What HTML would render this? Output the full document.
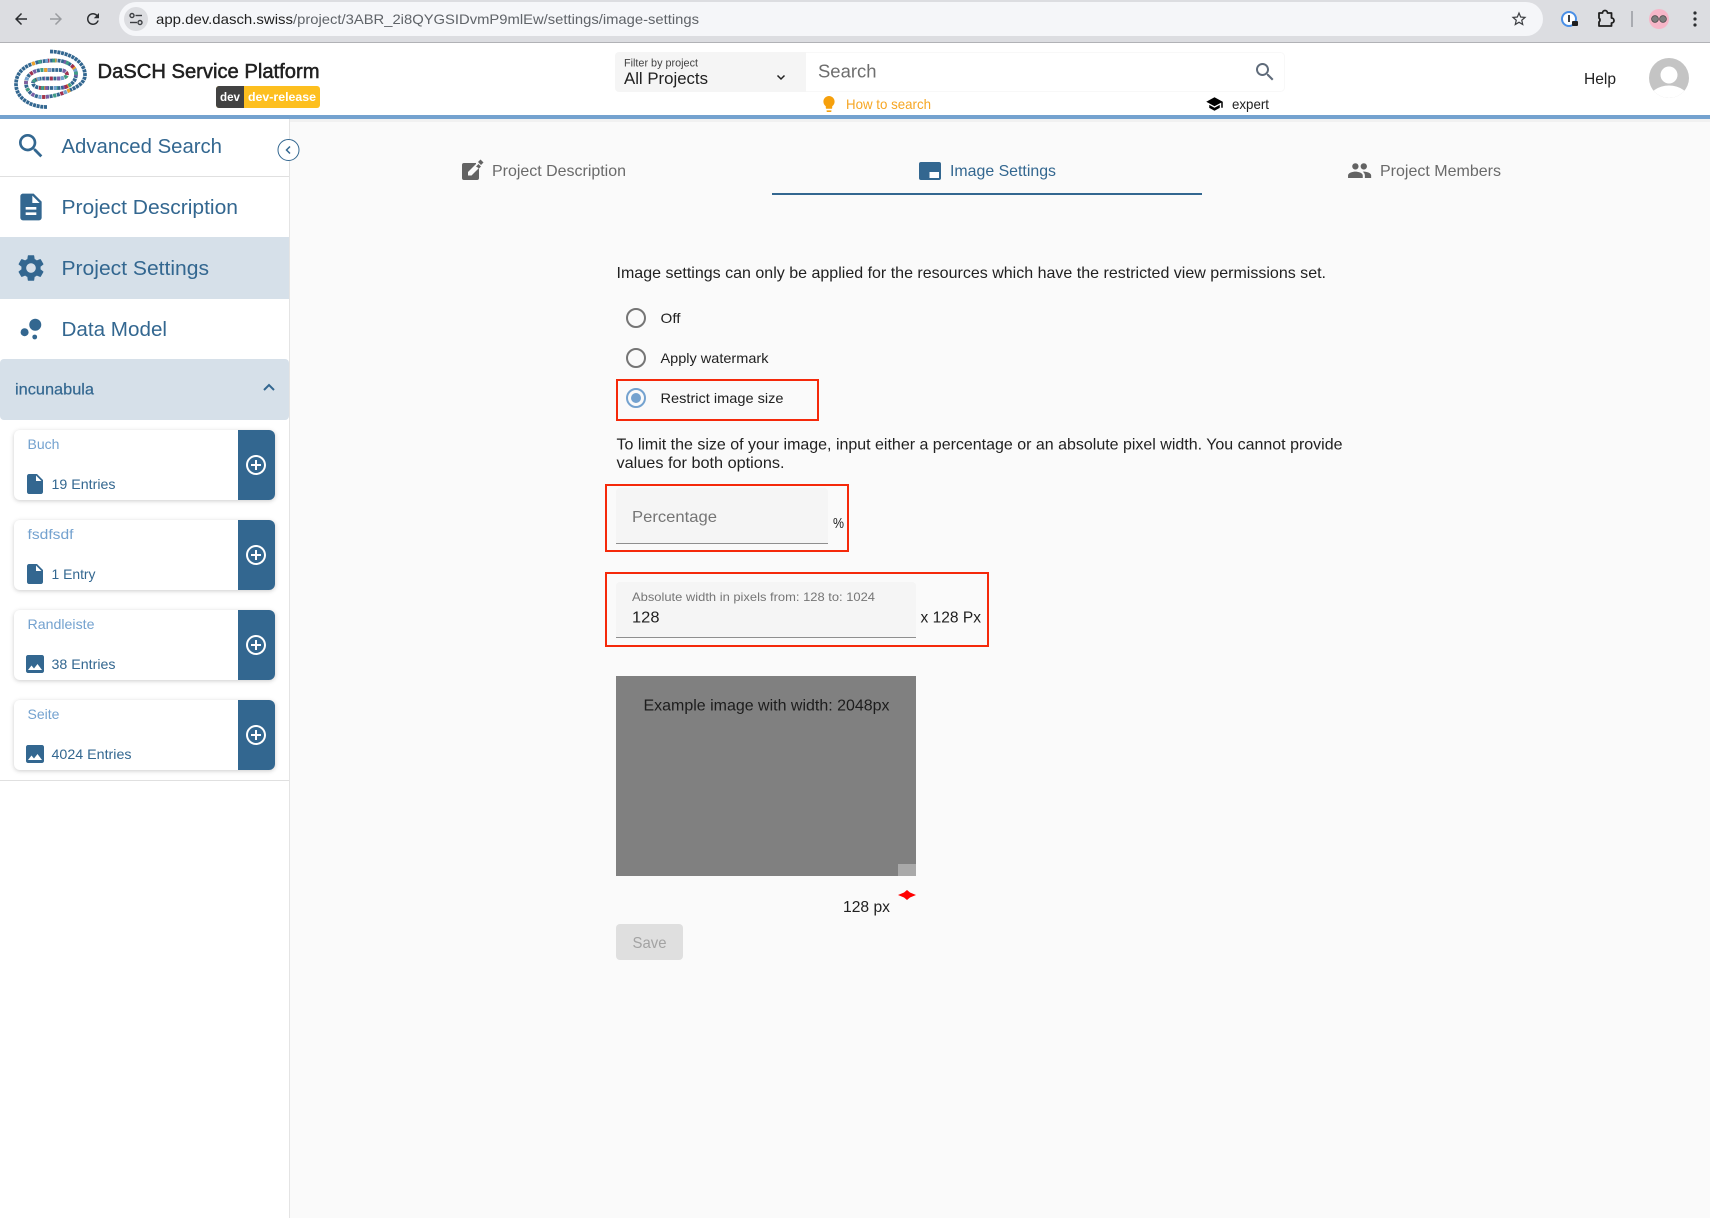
<!DOCTYPE html>
<html lang="en">
<head>
<meta charset="utf-8">
<title>Image Settings - DaSCH Service Platform</title>
<style>
html,body{margin:0;padding:0;background:#fafafa;width:1710px;height:1218px;overflow:hidden}
svg{display:block}
text{font-family:"Liberation Sans",sans-serif;white-space:pre}
.nav{font-size:20px;fill:#336790}
.ct{font-size:14px;fill:#74a2cf}
.cc{font-size:14px;fill:#336790}
.b{font-size:16px;fill:#212121}
.r{font-size:14px;fill:#212121}
.tab{font-size:16px;fill:#6a6a6a}
</style>
</head>
<body>
<svg width="1710" height="1218" viewBox="0 0 1710 1218" xmlns="http://www.w3.org/2000/svg">
<defs>
<path id="i-search" d="M15.5 14h-.79l-.28-.27C15.41 12.59 16 11.11 16 9.5 16 5.91 13.09 3 9.5 3S3 5.91 3 9.5 5.91 16 9.5 16c1.61 0 3.09-.59 4.23-1.57l.27.28v.79l5 4.99L20.49 19l-4.99-5zm-6 0C7.01 14 5 11.99 5 9.5S7.01 5 9.5 5 14 7.01 14 9.5 11.99 14 9.5 14z"/>
<path id="i-file" d="M6 2c-1.1 0-1.99.9-1.99 2L4 20c0 1.1.89 2 1.99 2H18c1.1 0 2-.9 2-2V8l-6-6H6zm7 7V3.5L18.5 9H13z"/>
<path id="i-image" d="M21 19V5c0-1.1-.9-2-2-2H5c-1.1 0-2 .9-2 2v14c0 1.1.9 2 2 2h14c1.1 0 2-.9 2-2zM8.5 13.5l2.5 3.01L14.5 12l4.5 6H5l3.5-4.5z"/>
<path id="i-plus" d="M13 7h-2v4H7v2h4v4h2v-4h4v-2h-4V7zm-1-5C6.48 2 2 6.48 2 12s4.48 10 10 10 10-4.48 10-10S17.52 2 12 2zm0 18c-4.41 0-8-3.59-8-8s3.59-8 8-8 8 3.59 8 8-3.59 8-8 8z"/>
<path id="card-blue" d="M0 0H31a6 6 0 0 1 6 6V64a6 6 0 0 1-6 6H0z"/>
<path id="sp1" d="M50 11.5C70 12 85 22 85 35C85 42 78 47 70 50"/>
<path id="sp2" d="M70 50C62 54 52 57 42 57C33 57 26 51 26 43C26 35 34 30 43 30L59 30C64 30 67 32 67 34.500C67 37 63 38.500 58 38.500L44 38.500"/>
<path id="sp3" d="M47 67C30 67 16 58 16 44C16 34 23 27 32 24"/>
<path id="sp4" d="M32 24C40 21 48 20.500 56 20.500C66 20.500 76 26 76 34C76 43 68 48 58 48L42 48C37 48 33 46 33 43C33 40 38 38.500 44 38.500"/>
<clipPath id="av"><circle cx="1669" cy="78" r="20"/></clipPath>
</defs>

<!-- page -->
<rect width="1710" height="1218" fill="#fafafa"/>

<!-- browser chrome -->
<rect width="1710" height="42" fill="#dcdde1"/>
<rect y="42" width="1710" height="1" fill="#b1b2b6"/>
<rect x="119" y="2" width="1424" height="34" rx="17" fill="#f5f6f9"/>
<circle cx="136" cy="19" r="12" fill="#dcdde1"/>
<g stroke="#3b3d41" stroke-width="1.4" fill="none">
<circle cx="132" cy="15.500" r="2"/><path d="M135.500 15.500h6.500"/>
<path d="M130 22.500h7"/><circle cx="140" cy="22.500" r="2"/>
</g>
<g transform="translate(12 10) scale(.75)" fill="#2b2d30"><path d="M20 11H7.83l5.59-5.59L12 4l-8 8 8 8 1.41-1.41L7.83 13H20v-2z"/></g>
<g transform="translate(47 10) scale(.75)" fill="#9a9ca0"><path d="M4 11h12.17l-5.59-5.59L12 4l8 8-8 8-1.41-1.41L16.17 13H4v-2z"/></g>
<g transform="translate(84 10) scale(.75)" fill="#2b2d30"><path d="M17.65 6.35C16.2 4.9 14.21 4 12 4c-4.42 0-7.99 3.58-7.99 8s3.57 8 7.99 8c3.73 0 6.84-2.55 7.73-6h-2.08c-.82 2.33-3.04 4-5.65 4-3.31 0-6-2.69-6-6s2.69-6 6-6c1.66 0 3.14.69 4.22 1.78L13 11h7V4l-2.35 2.35z"/></g>
<text x="156" y="24" font-size="14" fill="#1f1f1f" textLength="137" lengthAdjust="spacingAndGlyphs">app.dev.dasch.swiss</text>
<text x="293" y="24" font-size="14" fill="#5f6368" textLength="406" lengthAdjust="spacingAndGlyphs">/project/3ABR_2i8QYGSIDvmP9mlEw/settings/image-settings</text>
<g transform="translate(1510 10) scale(.75)" fill="#3c3e42"><path d="M22 9.24l-7.19-.62L12 2 9.19 8.63 2 9.24l5.46 4.73L5.82 21 12 17.27 18.18 21l-1.64-7.03L22 9.24zM12 15.4l-3.76 2.27 1-4.28-3.32-2.88 4.38-.38L12 6.1l1.71 4.04 4.38.38-3.32 2.88 1 4.28L12 15.4z"/></g>
<circle cx="1569" cy="19" r="7" fill="#fff" stroke="#4a8fe6" stroke-width="2"/>
<rect x="1568" y="15" width="2" height="7" fill="#3c3e42"/>
<rect x="1572" y="21" width="6" height="5" rx="1" fill="#1f1f1f"/>
<path d="M1599 13h3.500a2.500 2.500 0 0 1 5 0h4v5a2.500 2.500 0 0 1 0 5v3h-12.500v-4a2.500 2.500 0 0 0 0-4z" fill="none" stroke="#1f1f1f" stroke-width="1.800" stroke-linejoin="round"/>
<rect x="1631" y="11" width="2" height="16" fill="#a9abb1"/>
<circle cx="1659" cy="19" r="10" fill="#f6b6c8"/>
<circle cx="1655" cy="19" r="3.400" fill="#7d7d7d" stroke="#444" stroke-width=".7"/><circle cx="1663" cy="19" r="3.400" fill="#7d7d7d" stroke="#444" stroke-width=".7"/>
<g fill="#2b2d30"><circle cx="1695" cy="13" r="1.600"/><circle cx="1695" cy="19" r="1.600"/><circle cx="1695" cy="25" r="1.600"/></g>

<!-- header -->
<rect y="43" width="1710" height="72" fill="#fff"/>
<rect y="119" width="1710" height="3" fill="#f1f1f1"/>
<rect y="115" width="1710" height="4" fill="#74a2cf"/>

<!-- logo -->
<g transform="translate(0 40)" fill="none" stroke-width="3.700">
<use href="#sp1" stroke="#336790" stroke-dasharray="3 .7"/>
<use href="#sp3" stroke="#336790" stroke-dasharray="3 .7"/>
<use href="#sp2" stroke="#336790" stroke-dasharray="3 .7"/>
<use href="#sp4" stroke="#336790" stroke-dasharray="3 .7"/>
<use href="#sp2" stroke="#f0a32a" stroke-dasharray="3 22.900"/>
<use href="#sp2" stroke="#7a5ea6" stroke-dasharray="3 11.800" stroke-dashoffset="7.400"/>
<use href="#sp2" stroke="#a4304f" stroke-dasharray="3 15.500" stroke-dashoffset="11.100"/>
<use href="#sp2" stroke="#3f9e86" stroke-dasharray="3 26.600" stroke-dashoffset="14.800"/>
<use href="#sp2" stroke="#74a2cf" stroke-dasharray="3 22.900" stroke-dashoffset="22.200"/>
<use href="#sp4" stroke="#f0a32a" stroke-dasharray="3 18.800"/>
<use href="#sp4" stroke="#7a5ea6" stroke-dasharray="3 15" stroke-dashoffset="3.700"/>
<use href="#sp4" stroke="#a4304f" stroke-dasharray="3 22.900" stroke-dashoffset="11.100"/>
<use href="#sp4" stroke="#3f9e86" stroke-dasharray="3 11" stroke-dashoffset="7.400"/>
<use href="#sp4" stroke="#74a2cf" stroke-dasharray="3 29" stroke-dashoffset="18.500"/>
</g>
<text x="97.500" y="78" font-size="20" fill="#212121" stroke="#212121" stroke-width=".5" textLength="222" lengthAdjust="spacingAndGlyphs">DaSCH Service Platform</text>
<rect x="216" y="86" width="104" height="22" rx="3" fill="#fdbf1f"/>
<path d="M244 86H219a3 3 0 0 0-3 3V105a3 3 0 0 0 3 3H244z" fill="#424242"/>
<text x="220" y="101" font-size="12" font-weight="700" fill="#fff" textLength="20" lengthAdjust="spacingAndGlyphs">dev</text>
<text x="248" y="101" font-size="12" font-weight="700" fill="#fff" textLength="68" lengthAdjust="spacingAndGlyphs">dev-release</text>

<!-- search -->
<rect x="615.500" y="52.500" width="669" height="39" rx="4" fill="#fff" stroke="#f8f8f8"/>
<path d="M806 52H619a4 4 0 0 0-4 4V88a4 4 0 0 0 4 4H806z" fill="#f5f5f5"/>
<text x="624" y="66.500" font-size="11" fill="#424242" textLength="74" lengthAdjust="spacingAndGlyphs">Filter by project</text>
<text x="624" y="84" font-size="17" fill="#212121" textLength="84" lengthAdjust="spacingAndGlyphs">All Projects</text>
<path d="M777.500 75.500l3.500 3.500 3.500-3.500" fill="none" stroke="#212121" stroke-width="1.500"/>
<text x="818" y="77.500" font-size="18" fill="#6e6e6e" textLength="58.500" lengthAdjust="spacingAndGlyphs">Search</text>
<use href="#i-search" transform="translate(1253 60)" fill="#5f6b7a"/>
<path transform="translate(819.400 94.400) scale(.8)" fill="#f6a00c" d="M9 21c0 .55.45 1 1 1h4c.55 0 1-.45 1-1v-1H9v1zm3-19C8.140 2 5 5.140 5 9c0 2.380 1.190 4.470 3 5.740V17c0 .55.45 1 1 1h6c.55 0 1-.45 1-1v-2.260c1.810-1.270 3-3.360 3-5.740 0-3.860-3.140-7-7-7z"/>
<text x="846" y="109" font-size="14" fill="#f6a623" textLength="85" lengthAdjust="spacingAndGlyphs">How to search</text>
<path transform="translate(1205.500 95) scale(.75)" fill="#000" d="M5 13.180v4L12 21l7-3.820v-4L12 17l-7-3.820zM12 3L1 9l11 6 9-4.910V17h2V9L12 3z"/>
<text x="1232" y="109" font-size="14" fill="#212121" textLength="37" lengthAdjust="spacingAndGlyphs">expert</text>
<text x="1584" y="84" font-size="16" fill="#212121" textLength="32" lengthAdjust="spacingAndGlyphs">Help</text>
<circle cx="1669" cy="78" r="20" fill="#c4c4c4"/>
<g clip-path="url(#av)" fill="#fff"><circle cx="1669" cy="75" r="8.500"/><ellipse cx="1669" cy="100" rx="20" ry="14.500"/></g>

<!-- sidebar -->
<rect y="119" width="289" height="1099" fill="#fff"/>
<rect x="289" y="119" width="1" height="1099" fill="#e4e4e4"/>
<rect y="176" width="289" height="1" fill="#e0e0e0"/>
<use href="#i-search" transform="translate(15 130) scale(1.333)" fill="#336790"/>
<text class="nav" x="61.500" y="153" textLength="160.500" lengthAdjust="spacingAndGlyphs">Advanced Search</text>
<path transform="translate(15 191) scale(1.333)" fill="#336790" d="M14 2H6c-1.100 0-1.990.9-1.990 2L4 20c0 1.100.89 2 1.990 2H18c1.100 0 2-.9 2-2V8l-6-6zm2 16H8v-2h8v2zm0-4H8v-2h8v2zm-3-5V3.500L18.500 9H13z"/>
<text class="nav" x="61.500" y="214" textLength="176.500" lengthAdjust="spacingAndGlyphs">Project Description</text>
<rect y="237" width="289" height="62" fill="#d6e0e9"/>
<path transform="translate(15 252) scale(1.333)" fill="#336790" d="M19.140 12.940c.04-.3.06-.61.06-.94 0-.32-.02-.64-.07-.94l2.030-1.580c.18-.14.23-.41.12-.61l-1.920-3.320c-.12-.22-.37-.29-.59-.22l-2.390.96c-.5-.38-1.030-.7-1.620-.94l-.36-2.540c-.04-.24-.24-.41-.48-.41h-3.840c-.24 0-.43.17-.47.41l-.36 2.540c-.59.24-1.130.57-1.620.94l-2.390-.96c-.22-.08-.47 0-.59.22L2.740 8.870c-.12.21-.08.47.12.61l2.030 1.580c-.05.3-.09.63-.09.94s.02.64.07.94l-2.030 1.580c-.18.14-.23.41-.12.61l1.920 3.320c.12.22.37.29.59.22l2.390-.96c.5.38 1.030.7 1.620.94l.36 2.540c.05.24.24.41.48.41h3.840c.24 0 .44-.17.47-.41l.36-2.540c.59-.24 1.130-.56 1.620-.94l2.390.96c.22.08.47 0 .59-.22l1.920-3.320c.12-.22.07-.47-.12-.61l-2.010-1.580zM12 15.600c-1.980 0-3.600-1.620-3.600-3.600s1.620-3.600 3.600-3.600 3.600 1.620 3.600 3.600-1.620 3.600-3.600 3.600z"/>
<text class="nav" x="61.500" y="275" textLength="147.500" lengthAdjust="spacingAndGlyphs">Project Settings</text>
<g transform="translate(15 313) scale(1.333)" fill="#336790"><circle cx="7.200" cy="14.400" r="3"/><circle cx="14.800" cy="18" r="1.800"/><circle cx="15.200" cy="8.800" r="4.500"/></g>
<text class="nav" x="61.500" y="336" textLength="105.500" lengthAdjust="spacingAndGlyphs">Data Model</text>
<rect y="359" width="289" height="61" rx="4" fill="#d6e0e9"/>
<text x="15" y="394.500" font-size="16" fill="#336790" stroke="#336790" stroke-width=".2" textLength="79" lengthAdjust="spacingAndGlyphs">incunabula</text>
<path d="M264 390l5-5 5 5" fill="none" stroke="#336790" stroke-width="2"/>
<circle cx="288.500" cy="150" r="10.500" fill="#fff" stroke="#336790" stroke-width="1"/>
<path d="M290 146.500l-3.500 3.500 3.500 3.500" fill="none" stroke="#336790" stroke-width="1.500"/>

<!-- cards -->
<g style="filter:drop-shadow(0 1px 2px rgba(0,0,0,.2))" fill="#fff">
<rect x="14" y="430" width="261" height="70" rx="6"/>
<rect x="14" y="520" width="261" height="70" rx="6"/>
<rect x="14" y="610" width="261" height="70" rx="6"/>
<rect x="14" y="700" width="261" height="70" rx="6"/>
</g>
<g fill="#336790">
<use href="#card-blue" x="238" y="430"/><use href="#card-blue" x="238" y="520"/><use href="#card-blue" x="238" y="610"/><use href="#card-blue" x="238" y="700"/>
<use href="#i-file" x="23" y="472"/><use href="#i-file" x="23" y="562"/><use href="#i-image" x="23" y="652"/><use href="#i-image" x="23" y="742"/>
</g>
<g fill="#fff">
<use href="#i-plus" x="244" y="453"/><use href="#i-plus" x="244" y="543"/><use href="#i-plus" x="244" y="633"/><use href="#i-plus" x="244" y="723"/>
</g>
<text class="ct" x="27.500" y="449" textLength="32" lengthAdjust="spacingAndGlyphs">Buch</text>
<text class="cc" x="51.500" y="489" textLength="64" lengthAdjust="spacingAndGlyphs">19 Entries</text>
<text class="ct" x="27.500" y="539" textLength="46" lengthAdjust="spacingAndGlyphs">fsdfsdf</text>
<text class="cc" x="51.500" y="579" textLength="44" lengthAdjust="spacingAndGlyphs">1 Entry</text>
<text class="ct" x="27.500" y="629" textLength="67" lengthAdjust="spacingAndGlyphs">Randleiste</text>
<text class="cc" x="51.500" y="669" textLength="64" lengthAdjust="spacingAndGlyphs">38 Entries</text>
<text class="ct" x="27.500" y="719" textLength="32" lengthAdjust="spacingAndGlyphs">Seite</text>
<text class="cc" x="51.500" y="759" textLength="80" lengthAdjust="spacingAndGlyphs">4024 Entries</text>
<rect y="780" width="289" height="1" fill="#e0e0e0"/>

<!-- tabs -->
<path d="M464 163H476L479 160V178a2 2 0 0 1-2 2H464a2 2 0 0 1-2-2V165a2 2 0 0 1 2-2z" fill="#636363"/>
<rect x="476" y="159" width="8" height="8" fill="#fafafa"/>
<path d="M468 175.500V172L476.500 163.500L480 167L471.500 175.500z" fill="#fafafa"/>
<path d="M478 162L480.500 159.500L483.500 162.500L481 165z" fill="#636363"/>
<path d="M476 166.500L478.500 164L481 166.500L478.500 169V172V178a2 2 0 0 1 0 0V168z" fill="#636363"/>
<text class="tab" x="492" y="176" textLength="134" lengthAdjust="spacingAndGlyphs">Project Description</text>
<rect x="919" y="162" width="22" height="18" rx="2" fill="#336790"/>
<rect x="929.500" y="172" width="9.500" height="6" fill="#fff"/>
<text class="tab" style="fill:#336790" x="950" y="176" textLength="106" lengthAdjust="spacingAndGlyphs">Image Settings</text>
<rect x="772" y="193" width="430" height="2" fill="#336790"/>
<path transform="translate(1347 158) scale(1.050)" fill="#636363" d="M16 11c1.660 0 2.990-1.340 2.990-3S17.660 5 16 5c-1.660 0-3 1.340-3 3s1.340 3 3 3zm-8 0c1.660 0 2.990-1.340 2.990-3S9.660 5 8 5C6.340 5 5 6.340 5 8s1.340 3 3 3zm0 2c-2.330 0-7 1.170-7 3.500V19h14v-2.500c0-2.330-4.670-3.500-7-3.500zm8 0c-.29 0-.62.02-.97.05 1.160.84 1.970 1.970 1.970 3.450V19h6v-2.500c0-2.330-4.670-3.500-7-3.500z"/>
<text class="tab" x="1380" y="176" textLength="121" lengthAdjust="spacingAndGlyphs">Project Members</text>

<!-- content -->
<text class="b" x="616.500" y="278" textLength="709.500" lengthAdjust="spacingAndGlyphs">Image settings can only be applied for the resources which have the restricted view permissions set.</text>

<circle cx="636" cy="318" r="9" fill="none" stroke="#757575" stroke-width="2"/>
<text class="r" x="660.500" y="323" textLength="20" lengthAdjust="spacingAndGlyphs">Off</text>
<circle cx="636" cy="358" r="9" fill="none" stroke="#757575" stroke-width="2"/>
<text class="r" x="660.500" y="363" textLength="108" lengthAdjust="spacingAndGlyphs">Apply watermark</text>
<circle cx="636" cy="398" r="9" fill="none" stroke="#74a2cf" stroke-width="2"/>
<circle cx="636" cy="398" r="5" fill="#74a2cf"/>
<text class="r" x="660.500" y="403" textLength="123" lengthAdjust="spacingAndGlyphs">Restrict image size</text>
<rect x="617" y="380" width="201" height="40" fill="none" stroke="#f5290a" stroke-width="2"/>

<text class="b" x="616.500" y="449.500" textLength="726" lengthAdjust="spacingAndGlyphs">To limit the size of your image, input either a percentage or an absolute pixel width. You cannot provide</text>
<text class="b" x="616.500" y="468" textLength="168" lengthAdjust="spacingAndGlyphs">values for both options.</text>

<path d="M616 543V492a4 4 0 0 1 4-4H824a4 4 0 0 1 4 4V543z" fill="#f5f5f5"/>
<rect x="616" y="543" width="212" height="1" fill="#8f8f8f"/>
<text x="632" y="522" font-size="16" fill="#757575" textLength="85" lengthAdjust="spacingAndGlyphs">Percentage</text>
<text x="833" y="528" font-size="15" fill="#212121" textLength="11" lengthAdjust="spacingAndGlyphs">%</text>
<rect x="606" y="485" width="242" height="66" fill="none" stroke="#f5290a" stroke-width="2"/>

<path d="M616 637V586a4 4 0 0 1 4-4H912a4 4 0 0 1 4 4V637z" fill="#f5f5f5"/>
<rect x="616" y="637" width="300" height="1" fill="#8f8f8f"/>
<text x="632" y="601" font-size="12" fill="#757575" textLength="243" lengthAdjust="spacingAndGlyphs">Absolute width in pixels from: 128 to: 1024</text>
<text class="b" x="632" y="622.500" textLength="27.500" lengthAdjust="spacingAndGlyphs">128</text>
<text class="b" x="920.500" y="622.500" textLength="60.500" lengthAdjust="spacingAndGlyphs">x 128 Px</text>
<rect x="606" y="573" width="382" height="73" fill="none" stroke="#f5290a" stroke-width="2"/>

<rect x="616" y="676" width="300" height="200" fill="#808080"/>
<text x="643.500" y="710.500" font-size="16" fill="#1c1c1c" textLength="246" lengthAdjust="spacingAndGlyphs">Example image with width: 2048px</text>
<rect x="898" y="864" width="18" height="12" fill="#a9a9a9"/>
<polygon points="898,895 904,892.500 907,890 910,892.500 916,895 910,897.500 907,900 904,897.500" fill="#f00"/>
<text class="b" x="843" y="912" textLength="47" lengthAdjust="spacingAndGlyphs">128 px</text>
<rect x="616" y="924" width="67" height="36" rx="4" fill="#dfdfdf"/>
<text x="632.500" y="948" font-size="16" fill="#a3a3a3" textLength="34" lengthAdjust="spacingAndGlyphs">Save</text>
</svg>
</body>
</html>
